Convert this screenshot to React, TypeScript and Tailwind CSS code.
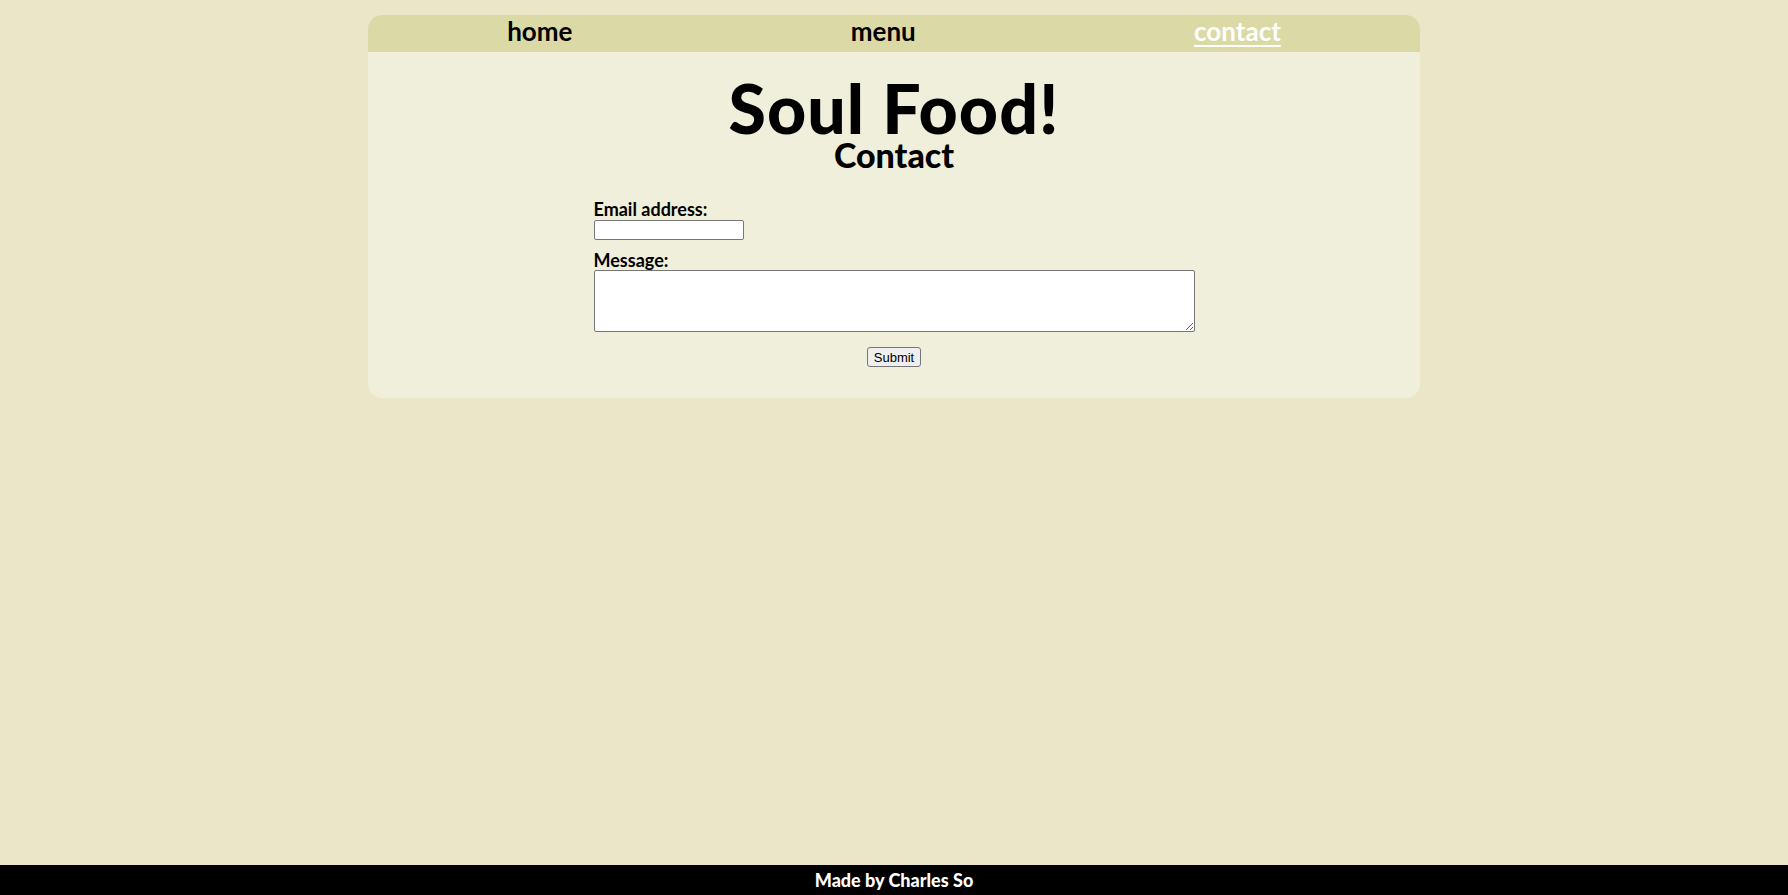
import React from "react";

export default function App() {
  const head = { fontFamily: '"Lato", "Noto Sans", sans-serif' };
  return (
    <div className="min-h-screen bg-[#ebe6c8] flex flex-col" style={head}>
      <div className="flex-1 pt-[15px]">
        <div className="mx-auto w-[1052px] bg-[#f0efdb] rounded-[14px] pb-[31px]">
          <nav className="flex justify-around items-center h-[37px] pb-[6px] bg-[#dbd9a6] rounded-t-[14px] text-[26px] font-bold leading-none">
            <a className="text-black">home</a>
            <a className="text-black">menu</a>
            <a className="text-white underline underline-offset-[4px] decoration-[2px]">contact</a>
          </nav>
          <h1 className="text-center text-[68px] font-black leading-[60px] tracking-[1px] mt-[26px] text-black">Soul Food!</h1>
          <h2 className="text-center text-[34px] font-black leading-[34px] mt-[0px] text-black">Contact</h2>
          <form className="w-[601px] mx-auto mt-[27px] flex flex-col">
            <label className="text-[18px] font-bold leading-[20px] text-black">Email address:</label>
            <input
              type="email"
              className="w-[150px] h-[20px] bg-white border border-[#767676] rounded-[2px] px-[2px] text-[13px] mt-[1px]"
              style={{ fontFamily: '"Liberation Sans", Arial, sans-serif' }}
            />
            <label className="text-[18px] font-bold leading-[20px] text-black mt-[10px]">Message:</label>
            <textarea
              className="w-[601px] h-[62px] bg-white border border-[#767676] rounded-[2px] mt-[0px] resize-y"
              style={{ fontFamily: '"Liberation Mono", monospace' }}
            />
            <div className="flex justify-center mt-[15px]">
              <button
                type="button"
                className="h-[20px] px-[6px] bg-[#efefef] border border-[#767676] rounded-[3px] text-[13px] leading-none text-black"
                style={{ fontFamily: '"Liberation Sans", Arial, sans-serif' }}
              >
                Submit
              </button>
            </div>
          </form>
        </div>
      </div>
      <footer className="h-[30px] bg-black text-white flex items-center justify-center text-[18px] font-black">
        Made by Charles So
      </footer>
    </div>
  );
}
